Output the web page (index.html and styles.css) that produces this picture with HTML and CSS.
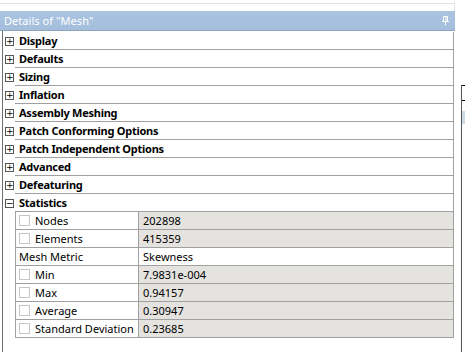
FILE: index.html
```html
<!DOCTYPE html>
<html>
<head>
<meta charset="utf-8">
<link rel="stylesheet" href="styles.css">
</head>
<body>
<div class="page">
  <div class="top-strip"></div>
  <div class="panel">
    <div class="header">
      <span class="title">Details of "Mesh"</span>
      <svg class="pin" width="9" height="10" viewBox="0 0 9 10">
        <path d="M2.5 0.5h4v5h-4z M1 5.5h7 M4.5 5.5v4" fill="none" stroke="#fff" stroke-width="1"/>
        <path d="M5 1v4" stroke="#fff" stroke-width="1"/>
      </svg>
    </div>
    <div class="body">
      <div class="grid">
        <div class="row"><span class="exp"><i class="box">+</i></span><span class="cat">Display</span></div>
        <div class="row"><span class="exp"><i class="box">+</i></span><span class="cat">Defaults</span></div>
        <div class="row"><span class="exp"><i class="box">+</i></span><span class="cat">Sizing</span></div>
        <div class="row"><span class="exp"><i class="box">+</i></span><span class="cat">Inflation</span></div>
        <div class="row"><span class="exp"><i class="box">+</i></span><span class="cat">Assembly Meshing</span></div>
        <div class="row"><span class="exp"><i class="box">+</i></span><span class="cat">Patch Conforming Options</span></div>
        <div class="row"><span class="exp"><i class="box">+</i></span><span class="cat">Patch Independent Options</span></div>
        <div class="row"><span class="exp"><i class="box">+</i></span><span class="cat">Advanced</span></div>
        <div class="row"><span class="exp"><i class="box">+</i></span><span class="cat">Defeaturing</span></div>
        <div class="row"><span class="exp"><i class="box minus">&#8722;</i></span><span class="cat">Statistics</span></div>
        <div class="row"><span class="exp"></span><span class="name"><i class="chk"></i>Nodes</span><span class="val">202898</span></div>
        <div class="row"><span class="exp"></span><span class="name"><i class="chk"></i>Elements</span><span class="val">415359</span></div>
        <div class="row"><span class="exp"></span><span class="name plain">Mesh Metric</span><span class="val white">Skewness</span></div>
        <div class="row"><span class="exp"></span><span class="name"><i class="chk"></i>Min</span><span class="val">7.9831e-004</span></div>
        <div class="row"><span class="exp"></span><span class="name"><i class="chk"></i>Max</span><span class="val">0.94157</span></div>
        <div class="row"><span class="exp"></span><span class="name"><i class="chk"></i>Average</span><span class="val">0.30947</span></div>
        <div class="row"><span class="exp"></span><span class="name"><i class="chk"></i>Standard Deviation</span><span class="val">0.23685</span></div>
      </div>
    </div>
  </div>
  <div class="edge">
    <div class="edge-mark"></div>
    <div class="edge-block"></div>
  </div>
</div>
</body>
</html>
```

FILE: styles.css
```css
html, body {
  margin: 0;
  padding: 0;
  background: #ffffff;
}
body {
  font-family: "Noto Sans", "Open Sans", sans-serif;
  font-size: 11px;
  color: #000;
}
.page {
  position: relative;
  width: 465px;
  height: 352px;
  overflow: hidden;
}
.top-strip {
  height: 3px;
  border-bottom: 1px solid #e2e2e2;
  border-right: 1px solid #e2e2e2;
  margin-bottom: 0;
  width: 455px;
  box-sizing: border-box;
  height: 11px;
  border-top: 3px solid #fff;
  border-bottom: none;
  background: #fff;
  box-shadow: inset 0 1px 0 #e2e2e2;
}
.panel {
  width: 455px;
  height: 341px;
  display: flex;
  flex-direction: column;
}
.header {
  height: 19px;
  border-bottom: 1px solid #8ea4bd;
  background: linear-gradient(#aac3e0, #a4bedc);
  display: flex;
  align-items: center;
  justify-content: space-between;
  padding: 0 4px 0 4px;
  flex: none;
}
.title {
  color: #ffffff;
  font-size: 11px;
  letter-spacing: 0.05px;
}
.pin {
  margin-right: 1px;
}
.body {
  flex: 1;
  margin-left: 2px;
  border-left: 1px solid #6e6e6e;
  padding-top: 1px;
}
.grid {
  width: 450px;
  border-right: 1px solid #a0a0a0;
}
.row {
  display: flex;
  height: 18px;
}
.exp {
  width: 12px;
  flex: none;
  display: flex;
  align-items: center;
  justify-content: center;
}
.box {
  width: 7px;
  height: 7px;
  border: 1px solid #555;
  font-style: normal;
  font-size: 9px;
  line-height: 7px;
  text-align: center;
  font-family: "DejaVu Sans", sans-serif;
  color: #000;
  background: #fff;
  margin-left: 1px;
}
.cat {
  flex: 1;
  border-bottom: 1px solid #a0a0a0;
  font-weight: bold;
  letter-spacing: -0.25px;
  padding-left: 4px;
  line-height: 17px;
}
.name {
  width: 122px;
  flex: none;
  border-left: 1px solid #a0a0a0;
  border-bottom: 1px solid #a0a0a0;
  display: flex;
  align-items: center;
  line-height: 17px;
}
.name.plain {
  padding-left: 3px;
  width: 119px;
}
.chk {
  width: 9px;
  height: 9px;
  border: 1px solid #c6c6c6;
  background: #fff;
  margin: 0 5px 0 3px;
  flex: none;
}
.val {
  flex: 1;
  border-left: 1px solid #a0a0a0;
  border-bottom: 1px solid #a0a0a0;
  background: #e4e3df;
  padding-left: 4px;
  line-height: 17px;
}
.val.white {
  background: #ffffff;
}
.edge {
  position: absolute;
  left: 461px;
  top: 85px;
  width: 4px;
  height: 267px;
  border-left: 1px solid #555;
}
.edge-mark {
  width: 3px;
  height: 14px;
  border-bottom: 1px solid #000;
  border-top: 1px solid #000;
}
.edge-block {
  margin-top: 10px;
  height: 13px;
  background: #cdd9e3;
}
```
